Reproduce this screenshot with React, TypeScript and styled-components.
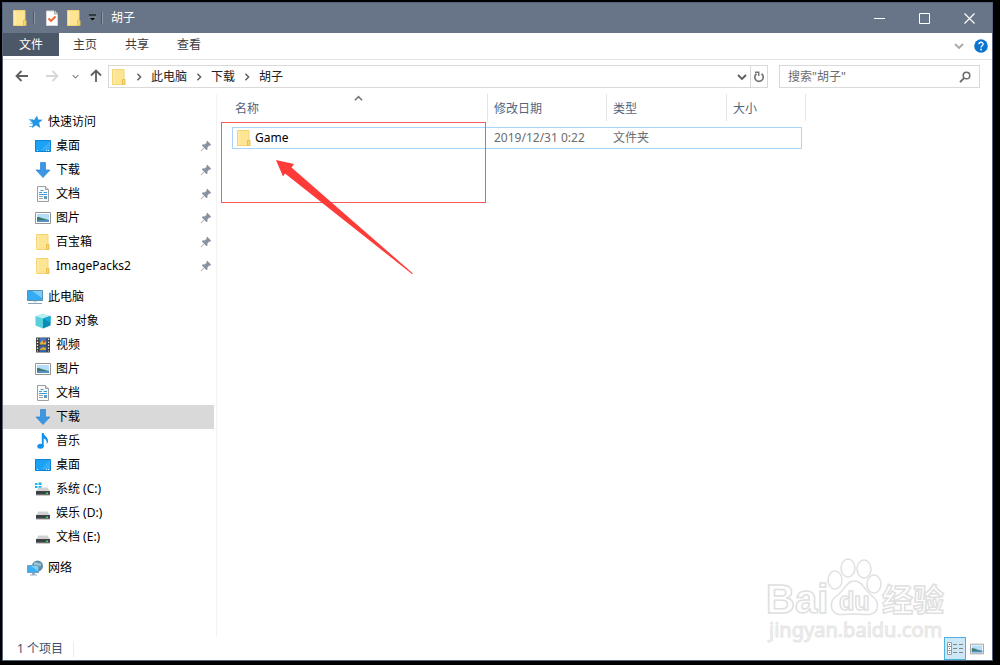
import React from 'react';
import styled, { createGlobalStyle, css } from 'styled-components';

const GlobalStyle = createGlobalStyle`
  * { box-sizing: border-box; }
  body {
    margin: 0;
    background: #000;
    font-family: 'Noto Sans', 'Noto Sans CJK SC', sans-serif;
    font-size: 12px;
    line-height: 16px;
    color: #000;
  }
  button, input {
    font: inherit;
    color: inherit;
    border: 0;
    padding: 0;
    background: transparent;
  }
  svg { display: block; flex: none; }
`;

const Desktop = styled.div`
  display: flex;
  min-height: 100vh;
  padding: 2px 7px 4px 2px;
`;

const Window = styled.div`
  position: relative;
  display: flex;
  flex-direction: column;
  flex: 1;
  min-width: 0;
  background: #fff;
  border: 1px solid #52637b;
`;

/* ---------- title bar ---------- */

const TitleBar = styled.header`
  display: flex;
  align-items: center;
  height: 30px;
  padding-left: 6px;
  background: #687588;
  color: #fff;
`;

const QuickButton = styled.button<{ $narrow?: boolean }>`
  display: flex;
  align-items: center;
  justify-content: center;
  width: ${(p) => (p.$narrow ? 14 : 22)}px;
  height: 28px;
`;

const TitleDivider = styled.span`
  width: 2px;
  height: 12px;
  margin: 0 6px 0 2px;
  border-left: 1px solid #4c5666;
  border-right: 1px solid #8f99a8;
`;

const Title = styled.h1`
  flex: 1;
  margin: 0;
  padding-left: 2px;
  font-size: 12px;
  font-weight: 400;
`;

const WindowButton = styled.button`
  display: flex;
  align-items: center;
  justify-content: center;
  width: 45px;
  height: 30px;
`;

/* ---------- ribbon ---------- */

const Ribbon = styled.nav`
  display: flex;
  height: 27px;
  border-bottom: 1px solid #e2e3e4;
`;

const RibbonTab = styled.button<{ $primary?: boolean }>`
  width: 52px;
  height: 23px;
  color: #3c3c3c;
  ${(p) =>
    p.$primary &&
    css`
      width: 56px;
      background: #4c5767;
      color: #fff;
    `}
`;

const RibbonTools = styled.div`
  display: flex;
  align-items: center;
  gap: 10px;
  margin-left: auto;
  padding-right: 4px;
`;

const IconButton = styled.button`
  display: flex;
  align-items: center;
  justify-content: center;
`;

/* ---------- address row ---------- */

const AddressRow = styled.div`
  display: flex;
  align-items: flex-start;
  height: 34px;
  padding: 5px 12px 0 4px;
`;

const NavButton = styled(IconButton)<{ $width: number }>`
  width: ${(p) => p.$width}px;
  height: 22px;
`;

const AddressBox = styled.div`
  display: flex;
  align-items: center;
  flex: 1;
  min-width: 0;
  height: 23px;
  padding-left: 2px;
  border: 1px solid #d9d9d9;
`;

const Crumb = styled.button`
  height: 20px;
  color: #222;
  white-space: nowrap;
`;

const CrumbArrow = styled.span`
  display: flex;
  justify-content: center;
  width: 24px;
`;

const BoxTail = styled.div`
  display: flex;
  align-self: stretch;
  margin-left: auto;
`;

const TailButton = styled(IconButton)<{ $line?: boolean }>`
  width: 17px;
  border-left: 1px solid ${(p) => (p.$line ? '#d9d9d9' : 'transparent')};
`;

const SearchBox = styled.label`
  display: flex;
  align-items: center;
  width: 201px;
  height: 23px;
  margin-left: 11px;
  padding: 0 8px;
  border: 1px solid #d9d9d9;
`;

const SearchInput = styled.input`
  flex: 1;
  min-width: 0;
  outline: 0;
  &::placeholder {
    color: #6d6d6d;
    opacity: 1;
  }
`;

/* ---------- body ---------- */

const Body = styled.div`
  display: grid;
  grid-template-columns: 214px 1fr;
  flex: 1;
`;

const Sidebar = styled.nav`
  padding: 16px 2px 0 0;
  border-right: 1px solid #f2f2f2;
`;

const Tree = styled.ul`
  margin: 0 0 7px;
  padding: 0;
  list-style: none;
`;

const TreeItem = styled.button<{ $root?: boolean; $selected?: boolean }>`
  display: flex;
  align-items: center;
  gap: 5px;
  width: 100%;
  height: 24px;
  padding: 0 2px 0 ${(p) => (p.$root ? 24 : 32)}px;
  background: ${(p) => (p.$selected ? '#d9d9d9' : 'transparent')};
  text-align: left;
  white-space: nowrap;
`;

const TreeLabel = styled.span`
  flex: 1;
`;

const Content = styled.main`
  position: relative;
  min-width: 0;
  padding-left: 15px;
`;

const FileTable = styled.table`
  table-layout: fixed;
  width: 574px;
  border-spacing: 0;
`;

const HeadCell = styled.th<{ $first?: boolean }>`
  position: relative;
  height: 33px;
  padding: 0 0 4px ${(p) => (p.$first ? 3 : 6)}px;
  font-weight: 400;
  text-align: left;
  color: #55647c;
  background: linear-gradient(#e5e5e5, #e5e5e5) right top / 1px 27px no-repeat;
`;

const SortMark = styled.span`
  position: absolute;
  top: 0;
  left: 0;
  right: 4px;
  display: flex;
  justify-content: center;
`;

const Cell = styled.td<{ $first?: boolean; $last?: boolean }>`
  height: 22px;
  padding: 0 0 0 ${(p) => (p.$first ? 3 : 6)}px;
  border: solid #a9d6f8;
  border-width: 1px ${(p) => (p.$last ? 1 : 0)}px 1px ${(p) => (p.$first ? 1 : 0)}px;
  color: #6d6d6d;
  white-space: nowrap;
`;

const FileName = styled.span`
  display: flex;
  align-items: center;
  gap: 3px;
  color: #000;
`;

/* ---------- overlays ---------- */

const Highlight = styled.div`
  position: absolute;
  top: 28px;
  left: 4px;
  width: 265px;
  height: 81px;
  border: 1px solid #f75a5a;
`;

const Arrow = styled.svg`
  position: absolute;
  top: 65px;
  left: 58px;
`;

const Watermark = styled.svg`
  position: absolute;
  right: 42px;
  bottom: 12px;
  pointer-events: none;
`;

/* ---------- status bar ---------- */

const StatusBar = styled.footer`
  display: flex;
  align-items: center;
  height: 23px;
  padding: 0 4px 0 14px;
  color: #3a4f6d;
`;

const Count = styled.span`
  padding-right: 10px;
  border-right: 1px solid #ececec;
`;

const Views = styled.div`
  display: flex;
  align-self: stretch;
  margin-left: auto;
`;

const ViewButton = styled(IconButton)<{ $active?: boolean }>`
  width: 22px;
  border: 1px solid ${(p) => (p.$active ? '#4db1dd' : 'transparent')};
  background: ${(p) => (p.$active ? '#cce8f6' : 'transparent')};
`;

/* ---------- icons ---------- */

const FolderIcon = () => (
  <svg width="16" height="16" viewBox="0 0 16 16">
    <path d="M1.500.5h11.500v15h-11.500z" fill="#fde594" stroke="#f5d573" />
    <path d="M2 1h2v14H2z" fill="#feeaa8" />
    <path d="M11.500 10.500h2.500v5h-2.500z" fill="#f9d978" stroke="#e9bf50" />
  </svg>
);

const CheckDocIcon = () => (
  <svg width="16" height="16" viewBox="0 0 16 16">
    <path d="M2.500 1h8L13.500 4v11.500h-11z" fill="#fff" stroke="#d6d6d6" />
    <path d="M10.500 1v3h3" fill="#e4e4e4" stroke="#a5a5a5" />
    <path d="M4.500 8.500l2.500 2.500 4.500-4.500" fill="none" stroke="#f0622d" strokeWidth="1.800" />
  </svg>
);

const MenuMark = () => (
  <svg width="9" height="8" viewBox="0 0 9 8">
    <path d="M1 .5h7v1H1z" fill="#000" />
    <path d="M1 3.500h7L4.500 7z" fill="#000" stroke="#aab2be" strokeWidth=".5" />
  </svg>
);

const Chevron = ({ dir, color = '#5c5c5c', w = 8 }: { dir: 'down' | 'up' | 'right'; color?: string; w?: number }) => {
  const turn = { down: 0, up: 180, right: -90 }[dir];
  return (
    <svg width={w} height={w} viewBox="0 0 10 10">
      <path d="M1 3l4 4 4-4" transform={`rotate(${turn} 5 5)`} fill="none" stroke={color} strokeWidth="1.800" />
    </svg>
  );
};

const LongArrow = ({ dir, color = '#606060' }: { dir: 'left' | 'right' | 'up'; color?: string }) => {
  const turn = { left: 0, right: 180, up: 90 }[dir];
  return (
    <svg width="14" height="14" viewBox="0 0 14 14">
      <path d="M13 7H2M6.500 2l-5 5 5 5" transform={`rotate(${turn} 7 7)`} fill="none" stroke={color} strokeWidth="1.800" />
    </svg>
  );
};

const RefreshIcon = () => (
  <svg width="12" height="12" viewBox="0 0 12 12">
    <path d="M8.500 2.800A4.200 4.200 0 1 1 3.500 2.800" fill="none" stroke="#777" strokeWidth="1.700" />
    <path d="M2 1.300h3.700v3.700" fill="none" stroke="#777" strokeWidth="1.500" />
  </svg>
);

const SearchIcon = () => (
  <svg width="12" height="12" viewBox="0 0 12 12">
    <circle cx="7.500" cy="4.500" r="3.300" fill="none" stroke="#6a6a6a" strokeWidth="1.500" />
    <path d="M5.200 6.900L1 11.200" stroke="#6a6a6a" strokeWidth="1.900" />
  </svg>
);

const StarIcon = () => (
  <svg width="16" height="16" viewBox="0 0 16 16">
    <path d="M10 1.500l1.200 4 4.600.2-3.700 3 1.200 5.300-4.300-2.800-4.300 3 1.400-5L2.500 6.500l4.800-.7z" fill="#2497e3" />
    <path d="M2 5.500h4M2 12.500h3M3 9.500h3" stroke="#6ec0f2" />
  </svg>
);

const DesktopIcon = () => (
  <svg width="16" height="16" viewBox="0 0 16 16">
    <path d="M.5 2.500h15v11H.5z" fill="#1ba1f5" stroke="#0d83d6" />
    <path d="M15 3v9H6z" fill="#36adfa" />
    <path d="M2 12.500h1M11 12.500h1M13 12.500h1" stroke="#d8f0ff" />
  </svg>
);

const DownloadIcon = () => (
  <svg width="16" height="16" viewBox="0 0 16 16">
    <path d="M5.500.5h5v7.500h4.500L8 15.500 1 8h4.500z" fill="#3b97e3" stroke="#2b82cf" strokeWidth=".7" />
  </svg>
);

const DocumentIcon = () => (
  <svg width="16" height="16" viewBox="0 0 16 16">
    <path d="M2.500.5h8l3 3v12h-11z" fill="#fbfbfb" stroke="#9a9fa4" />
    <path d="M10.500.5v3h3" fill="#ddd" stroke="#9a9fa4" />
    <path d="M4 6.500h3M8.500 6.500H12M4 8.500h8M5.500 4.500h3" stroke="#3c9fdd" />
    <path d="M4 10.500h4M4 12.500h4" stroke="#9aa6b0" />
    <path d="M9 10h3v3H9z" fill="#5b9cc4" />
  </svg>
);

const PictureIcon = ({ size = 16 }: { size?: number }) => (
  <svg width={size} height={size} viewBox="0 0 16 16">
    <path d="M.5 2.500h15v11H.5z" fill="#fff" stroke="#949494" />
    <path d="M2 4h12v8H2z" fill="#b5dcf8" />
    <path d="M2 7c4 0 6 2 12 3v1H2z" fill="#3d7a6c" />
    <path d="M2 10.500c5-1 8 0 12-.5v2H2z" fill="#5590c2" />
  </svg>
);

const ComputerIcon = () => (
  <svg width="16" height="16" viewBox="0 0 16 16">
    <path d="M.5 1.500h15v10H.5z" fill="#37abf2" stroke="#5d8fb3" />
    <path d="M15 2v7L5 2z" fill="#7accfa" />
    <path d="M6 12h4v1.500H6z" fill="#d5dde5" />
    <path d="M1 14.500h14" stroke="#8ba3b8" />
  </svg>
);

const CubeIcon = () => (
  <svg width="16" height="16" viewBox="0 0 16 16">
    <path d="M8 .5l7.500 2.500L8 5.500.5 3z" fill="#b4eef2" />
    <path d="M.5 3L8 5.500v10L.5 12.500z" fill="#57cfdc" />
    <path d="M15.500 3L8 5.500v10l7.500-3z" fill="#0a8cb4" />
    <path d="M8 5.500L15.500 3v7z" fill="#14a9d6" />
  </svg>
);

const VideoIcon = () => (
  <svg width="16" height="16" viewBox="0 0 16 16">
    <path d="M1 .5h14v15H1z" fill="#3c3c3c" />
    <path d="M4.500 1h7v6.500h-7z" fill="#3f74c8" />
    <path d="M4.500 8.500h7V15h-7z" fill="#3462b0" />
    <path d="M5 6l3-3 3 2v2.500H5z" fill="#e0b32e" />
    <path d="M5 12l3-2 3 1v2H5z" fill="#d9a728" />
    <path d="M8 3.500h2v2H8z" fill="#c44131" />
    <path d="M2.500 1.500v13M13.500 1.500v13" stroke="#e6e6e6" strokeWidth="1.300" strokeDasharray="1.500 1.500" />
  </svg>
);

const MusicIcon = () => (
  <svg width="16" height="16" viewBox="0 0 16 16">
    <ellipse cx="5.500" cy="13.200" rx="3.200" ry="2.500" fill="#1191ee" />
    <path d="M6.800 0h1.900c0 3 4.800 4 4.300 8.500-.1 1-.7 2-1.400 2.500.6-3-.5-4.500-2.900-5.500v8H6.800z" fill="#1191ee" />
  </svg>
);

const DriveIcon = ({ system }: { system?: boolean }) => (
  <svg width="16" height="16" viewBox="0 0 16 16">
    {system && <path d="M0 2h2.500v2H0zM3.500 1.500h3V4h-3zM0 5h2.500v2H0zM3.500 5h3v2.500h-3z" fill="#19b1f0" />}
    <path d="M3.500 6.500h9l2.500 4H1z" fill="#cfd1d3" />
    <path d="M1 10h14v4H1z" fill="#3f4144" />
    <path d="M1 14h14" stroke="#9a9c9e" />
    <path d="M11 11.500h2v1.500h-2z" fill="#41d45c" />
  </svg>
);

const NetworkIcon = () => (
  <svg width="16" height="16" viewBox="0 0 16 16">
    <circle cx="10.500" cy="6" r="5.500" fill="#5b8fa9" />
    <path d="M7 2.500c3-1 4 1 7 1V6c-2 1-4-1-7 0z" fill="#9cc3d4" />
    <path d="M.5 5.500h11v7H.5z" fill="#3db0f3" stroke="#6f9fbd" />
    <path d="M11 6v5L4 6z" fill="#7fcffb" />
    <path d="M5 13h3v1.500H5zM3 14.500h7v1H3z" fill="#9db0bf" />
  </svg>
);

const PinIcon = () => (
  <svg width="12" height="12" viewBox="0 0 12 12">
    <path d="M7.200.8l4 4-1 .9-.8-.2-2 2 .2 1.800-1 1-2.400-2.400L1.500 11l-.8.3.3-.8 3-3L1.800 5.300l1-1 1.900.3 2-2-.4-.9z" fill="#87939f" />
  </svg>
);

const HelpIcon = () => (
  <svg width="14" height="14" viewBox="0 0 14 14">
    <circle cx="7" cy="7" r="6.800" fill="#0a74d1" />
    <path d="M5 5.300c0-2.800 4.200-2.600 4.100-.2C9 6.700 7 6.700 7 8.500" fill="none" stroke="#fff" strokeWidth="1.300" />
    <circle cx="7" cy="10.500" r=".9" fill="#fff" />
  </svg>
);

const DetailsIcon = () => (
  <svg width="16" height="14" viewBox="0 0 16 14">
    <path d="M.5.5h4v12h-4zM.5 4.500h4M.5 8.500h4" fill="#fff" stroke="#9b9b9b" />
    <path d="M6 2.500h4M12 2.500h4M6 6.500h4M12 6.500h4M6 10.500h4M12 10.500h4" stroke="#858585" />
    <path d="M2 2h1v1H2z" fill="#555" />
    <path d="M2 6h1v1H2z" fill="#2c8fd8" />
    <path d="M2 10h1v1H2z" fill="#e33" />
  </svg>
);

/* ---------- data ---------- */

type Entry = { label: string; icon: React.ReactNode; pinned?: boolean; selected?: boolean };

const groups: { root: Entry; items: Entry[] }[] = [
  {
    root: { label: '快速访问', icon: <StarIcon /> },
    items: [
      { label: '桌面', icon: <DesktopIcon />, pinned: true },
      { label: '下载', icon: <DownloadIcon />, pinned: true },
      { label: '文档', icon: <DocumentIcon />, pinned: true },
      { label: '图片', icon: <PictureIcon />, pinned: true },
      { label: '百宝箱', icon: <FolderIcon />, pinned: true },
      { label: 'ImagePacks2', icon: <FolderIcon />, pinned: true },
    ],
  },
  {
    root: { label: '此电脑', icon: <ComputerIcon /> },
    items: [
      { label: '3D 对象', icon: <CubeIcon /> },
      { label: '视频', icon: <VideoIcon /> },
      { label: '图片', icon: <PictureIcon /> },
      { label: '文档', icon: <DocumentIcon /> },
      { label: '下载', icon: <DownloadIcon />, selected: true },
      { label: '音乐', icon: <MusicIcon /> },
      { label: '桌面', icon: <DesktopIcon /> },
      { label: '系统 (C:)', icon: <DriveIcon system /> },
      { label: '娱乐 (D:)', icon: <DriveIcon /> },
      { label: '文档 (E:)', icon: <DriveIcon /> },
    ],
  },
  { root: { label: '网络', icon: <NetworkIcon /> }, items: [] },
];

const TreeRow = ({ entry, root }: { entry: Entry; root?: boolean }) => (
  <li>
    <TreeItem type="button" $root={root} $selected={entry.selected}>
      {entry.icon}
      <TreeLabel>{entry.label}</TreeLabel>
      {entry.pinned && <PinIcon />}
    </TreeItem>
  </li>
);

const crumbs = ['此电脑', '下载', '胡子'];

export default function App() {
  return (
    <Desktop>
      <GlobalStyle />
      <Window>
        <TitleBar>
          <QuickButton type="button" aria-label="窗口菜单"><FolderIcon /></QuickButton>
          <TitleDivider />
          <QuickButton type="button" aria-label="属性"><CheckDocIcon /></QuickButton>
          <QuickButton type="button" aria-label="新建文件夹"><FolderIcon /></QuickButton>
          <QuickButton type="button" $narrow aria-label="自定义快速访问工具栏"><MenuMark /></QuickButton>
          <TitleDivider />
          <Title>胡子</Title>
          <WindowButton type="button" aria-label="最小化">
            <svg width="11" height="11"><path d="M0 5.500h11" stroke="#fff" /></svg>
          </WindowButton>
          <WindowButton type="button" aria-label="最大化">
            <svg width="11" height="11"><path d="M.5.5h10v10H.5z" fill="none" stroke="#fff" /></svg>
          </WindowButton>
          <WindowButton type="button" aria-label="关闭">
            <svg width="11" height="11"><path d="M.5.5l10 10M10.500.5l-10 10" stroke="#fff" strokeWidth="1.200" /></svg>
          </WindowButton>
        </TitleBar>

        <Ribbon>
          <RibbonTab type="button" $primary>文件</RibbonTab>
          <RibbonTab type="button">主页</RibbonTab>
          <RibbonTab type="button">共享</RibbonTab>
          <RibbonTab type="button">查看</RibbonTab>
          <RibbonTools>
            <IconButton type="button" aria-label="展开功能区"><Chevron dir="down" color="#a8a8a8" w={10} /></IconButton>
            <IconButton type="button" aria-label="帮助"><HelpIcon /></IconButton>
          </RibbonTools>
        </Ribbon>

        <AddressRow>
          <NavButton type="button" $width={30} aria-label="后退"><LongArrow dir="left" /></NavButton>
          <NavButton type="button" $width={30} aria-label="前进"><LongArrow dir="right" color="#d6d6d6" /></NavButton>
          <NavButton type="button" $width={16} aria-label="最近位置"><Chevron dir="down" color="#8a8a8a" w={7} /></NavButton>
          <NavButton type="button" $width={25} aria-label="上移"><LongArrow dir="up" /></NavButton>
          <AddressBox>
            <FolderIcon />
            {crumbs.map((name) => (
              <React.Fragment key={name}>
                <CrumbArrow><Chevron dir="right" /></CrumbArrow>
                <Crumb type="button">{name}</Crumb>
              </React.Fragment>
            ))}
            <BoxTail>
              <TailButton type="button" aria-label="以前的位置"><Chevron dir="down" w={10} /></TailButton>
              <TailButton type="button" $line aria-label="刷新"><RefreshIcon /></TailButton>
            </BoxTail>
          </AddressBox>
          <SearchBox>
            <SearchInput type="text" placeholder={'搜索"胡子"'} aria-label="搜索" />
            <SearchIcon />
          </SearchBox>
        </AddressRow>

        <Body>
          <Sidebar>
            {groups.map((group) => (
              <Tree key={group.root.label}>
                <TreeRow entry={group.root} root />
                {group.items.map((item) => (
                  <TreeRow key={item.label} entry={item} />
                ))}
              </Tree>
            ))}
          </Sidebar>

          <Content>
            <FileTable>
              <colgroup>
                <col width="256" />
                <col width="119" />
                <col width="120" />
                <col width="75" />
                <col width="4" />
              </colgroup>
              <thead>
                <tr>
                  <HeadCell $first aria-sort="ascending">
                    名称
                    <SortMark><Chevron dir="up" color="#777" w={9} /></SortMark>
                  </HeadCell>
                  <HeadCell>修改日期</HeadCell>
                  <HeadCell>类型</HeadCell>
                  <HeadCell colSpan={2}>大小</HeadCell>
                </tr>
              </thead>
              <tbody>
                <tr>
                  <Cell $first><FileName><FolderIcon />Game</FileName></Cell>
                  <Cell>2019/12/31 0:22</Cell>
                  <Cell>文件夹</Cell>
                  <Cell $last />
                </tr>
              </tbody>
            </FileTable>
            <Highlight />
            <Arrow width="140" height="116" viewBox="0 0 140 116">
              <path d="M1 1l18 4-2.500 3.500L138 114.500l-1 .5L10 14.500 8 17.500z" fill="#fd3b38" />
            </Arrow>
          </Content>
        </Body>

        <StatusBar>
          <Count>1 个项目</Count>
          <Views>
            <ViewButton type="button" $active aria-label="详细信息"><DetailsIcon /></ViewButton>
            <ViewButton type="button" aria-label="大图标"><PictureIcon size={14} /></ViewButton>
          </Views>
        </StatusBar>

        <Watermark width="184" height="92" viewBox="0 0 184 92" fill="#fff" stroke="#e0e0e0" strokeWidth="1.500" fontFamily="'Liberation Sans', 'Noto Sans CJK SC', sans-serif" fontWeight="700">
          <ellipse cx="69" cy="24" rx="7" ry="9" />
          <ellipse cx="82" cy="12" rx="7" ry="9" />
          <ellipse cx="98" cy="13" rx="7" ry="9" />
          <ellipse cx="108" cy="28" rx="7" ry="9" />
          <path d="M88 25c8 0 10 8 16 13 7 6 9 10 7 15-3 8-13 5-23 5s-19 3-22-5c-2-6 0-10 7-15 6-5 8-13 15-13z" />
          <text x="0" y="57" fontSize="40">Bai</text>
          <text x="73" y="54" fontSize="25">du</text>
          <text x="116" y="55" fontSize="31">经验</text>
          <text x="3" y="81" fontSize="20" fontFamily="'Noto Sans', sans-serif" fontWeight="400" fill="#f2f2f2" stroke="#e6e6e6" strokeWidth="1">jingyan.baidu.com</text>
        </Watermark>
      </Window>
    </Desktop>
  );
}
